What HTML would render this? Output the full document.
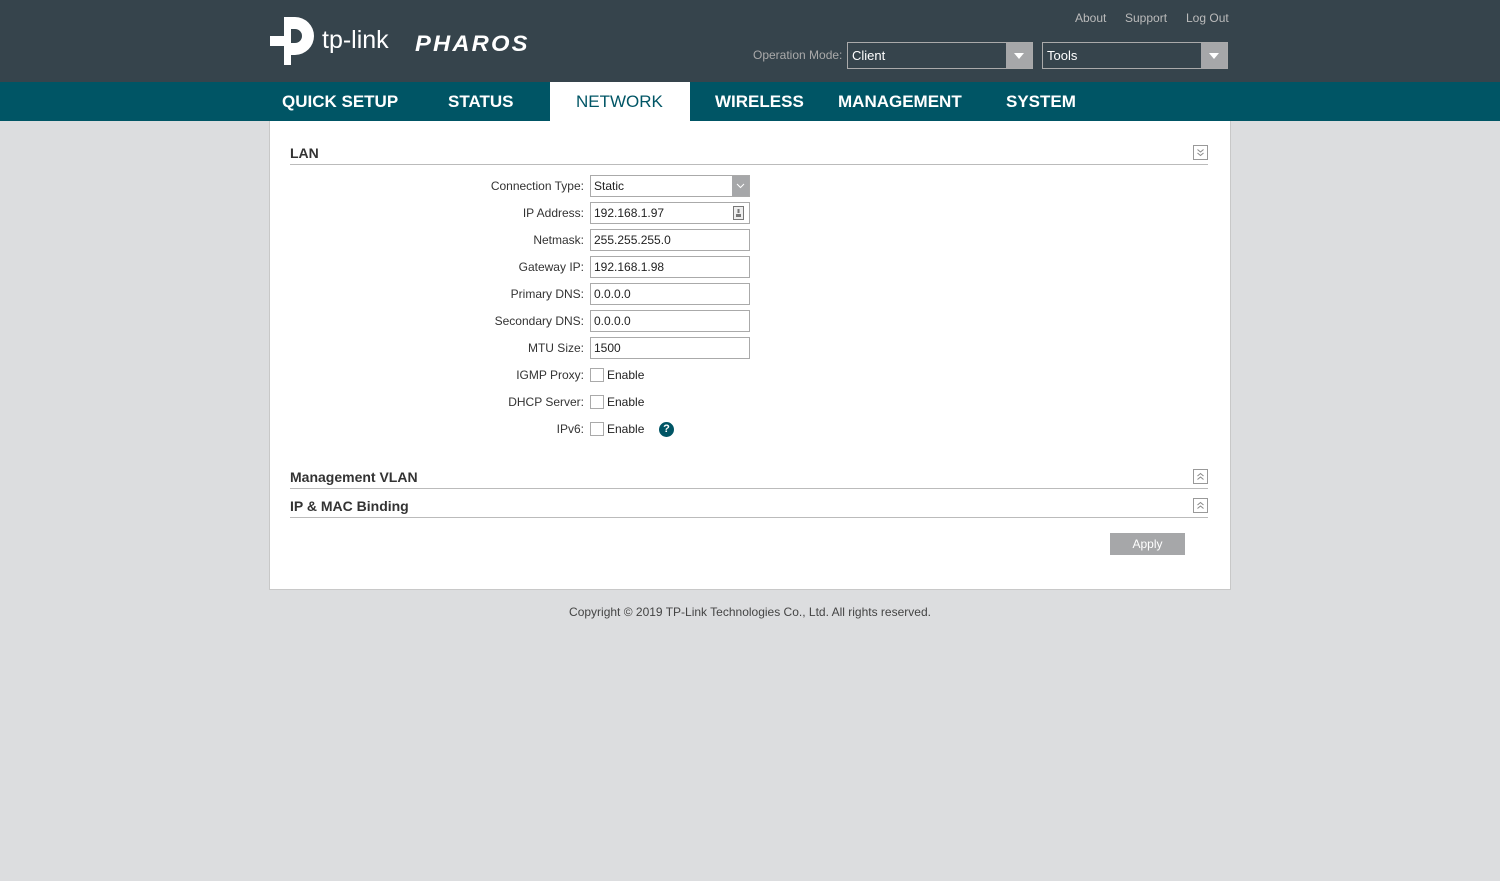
<!DOCTYPE html><html><head><style>
body{margin:0;width:1500px;height:881px;background:#dcdddf;font-family:"Liberation Sans",Arial,sans-serif;position:relative;overflow:hidden}
.a{position:absolute}
#hd{left:0;top:0;width:1500px;height:82px;background:#36444c}
#nav{left:0;top:82px;width:1500px;height:39px;background:#005565}
.nv{position:absolute;top:82px;height:39px;line-height:39px;color:#fff;font-weight:bold;font-size:17px}
#panel{left:269px;top:121px;width:960px;height:468px;background:#fff;border:1px solid #c8c8c8;border-top:none}
.sec{position:absolute;left:290px;width:918px;border-bottom:1px solid #bbb;font-size:14px;font-weight:bold;color:#333}
.tg{position:absolute;right:0;top:0}
.lb{position:absolute;right:916px;font-size:12px;color:#333;text-align:right}
.in{position:absolute;left:590px;border:1px solid #aaa;font-size:12px;line-height:20px;padding-left:3px;box-sizing:border-box;width:160px;height:22px;color:#222}
.cb{position:absolute;left:590px;width:12px;height:12px;border:1px solid #aaa;background:#fff}
.en{position:absolute;left:607px;font-size:12px;color:#222}
.sel{position:absolute;top:42px;width:186px;height:27px;border:1px solid #aaa;box-sizing:border-box;background:#36444c;color:#fff;font-size:13px;line-height:25px;padding-left:4px}
.sel i{position:absolute;right:0;top:0;width:26px;height:25px;background:#a6a7a9}
.sel i:after{content:"";position:absolute;left:8px;top:10px;border-left:5px solid transparent;border-right:5px solid transparent;border-top:6px solid #fff}
</style></head><body>
<div id="hd" class="a"></div>
<svg class="a" style="left:270px;top:17px" width="50" height="48" viewBox="0 0 50 48"><path d="M14 0h11a19 19 0 0 1 0 38h-5v-12h5a7 7 0 0 0 0-14h-4v36h-7z" fill="#fff"/><rect x="0" y="19" width="14" height="10" fill="#fff"/></svg>
<div class="a" style="left:322px;top:26px;color:#fff;font-size:25px">tp-link</div>
<div class="a" style="left:415px;top:31px;color:#fff;font-size:22px;font-weight:bold;font-style:italic;letter-spacing:2px;transform:scaleX(1.08);transform-origin:left">PHAROS</div>
<div class="a" style="left:1075px;top:11px;color:#bbb;font-size:12px">About</div>
<div class="a" style="left:1125px;top:11px;color:#bbb;font-size:12px">Support</div>
<div class="a" style="left:1186px;top:11px;color:#bbb;font-size:12px">Log Out</div>
<div class="a" style="left:753px;top:48px;color:#aaa;font-size:12px">Operation Mode:</div>
<div class="sel" style="left:847px">Client<i></i></div>
<div class="sel" style="left:1042px">Tools<i></i></div>
<div id="nav" class="a"></div>
<div class="nv" style="left:282px">QUICK SETUP</div>
<div class="nv" style="left:448px">STATUS</div>
<div class="a" style="left:550px;top:82px;width:140px;height:39px;background:#fff"></div>
<div class="nv" style="left:576px;color:#005565;font-weight:normal">NETWORK</div>
<div class="nv" style="left:715px">WIRELESS</div>
<div class="nv" style="left:838px">MANAGEMENT</div>
<div class="nv" style="left:1006px">SYSTEM</div>
<div id="panel" class="a"></div>
<div class="sec" style="top:145px;height:19px">LAN<svg class="tg" width="15" height="15" viewBox="0 0 15 15"><rect x=".5" y=".5" width="14" height="14" fill="#fff" stroke="#999"/><path d="M4.5 4.5l3 2.5 3-2.5M4.5 8l3 2.5 3-2.5" fill="none" stroke="#888"/></svg></div>
<div class="lb" style="top:179px">Connection Type:</div>
<div class="in" style="top:175px">Static<svg style="position:absolute;right:0;top:0" width="17" height="20"><rect width="17" height="20" fill="#a6a7a9"/><path d="M5 8l3.5 3.5L12 8" fill="none" stroke="#fff"/></svg></div>
<div class="lb" style="top:206px">IP Address:</div><div class="in" style="top:202px">192.168.1.97<svg style="position:absolute;right:5px;top:3px" width="11" height="14"><rect x=".5" y=".5" width="10" height="13" fill="#eee" stroke="#777"/><rect x="4.5" y="3" width="2" height="4" fill="#777"/><rect x="3" y="8" width="5" height="3" fill="#777"/></svg></div>
<div class="lb" style="top:233px">Netmask:</div><div class="in" style="top:229px">255.255.255.0</div>
<div class="lb" style="top:260px">Gateway IP:</div><div class="in" style="top:256px">192.168.1.98</div>
<div class="lb" style="top:287px">Primary DNS:</div><div class="in" style="top:283px">0.0.0.0</div>
<div class="lb" style="top:314px">Secondary DNS:</div><div class="in" style="top:310px">0.0.0.0</div>
<div class="lb" style="top:341px">MTU Size:</div><div class="in" style="top:337px">1500</div>
<div class="lb" style="top:368px">IGMP Proxy:</div><div class="cb" style="top:368px"></div><div class="en" style="top:368px">Enable</div>
<div class="lb" style="top:395px">DHCP Server:</div><div class="cb" style="top:395px"></div><div class="en" style="top:395px">Enable</div>
<div class="lb" style="top:422px">IPv6:</div><div class="cb" style="top:422px"></div><div class="en" style="top:422px">Enable</div>
<div class="a" style="left:659px;top:422px;width:15px;height:15px;border-radius:50%;background:#005565;color:#fff;font-size:11px;font-weight:bold;text-align:center;line-height:15px">?</div>
<div class="sec" style="top:469px;height:19px">Management VLAN<svg class="tg" width="15" height="15" viewBox="0 0 15 15"><rect x=".5" y=".5" width="14" height="14" fill="#fff" stroke="#999"/><path d="M4.5 7l3-2.5 3 2.5M4.5 10.5l3-2.5 3 2.5" fill="none" stroke="#888"/></svg></div>
<div class="sec" style="top:498px;height:19px">IP &amp; MAC Binding<svg class="tg" width="15" height="15" viewBox="0 0 15 15"><rect x=".5" y=".5" width="14" height="14" fill="#fff" stroke="#999"/><path d="M4.5 7l3-2.5 3 2.5M4.5 10.5l3-2.5 3 2.5" fill="none" stroke="#888"/></svg></div>
<div class="a" style="left:1110px;top:533px;width:75px;height:22px;background:#a6a7a9;color:#fff;font-size:12px;text-align:center;line-height:22px">Apply</div>
<div class="a" style="left:0;width:1500px;top:605px;text-align:center;font-size:12px;color:#444">Copyright © 2019 TP-Link Technologies Co., Ltd. All rights reserved.</div>
</body></html>
